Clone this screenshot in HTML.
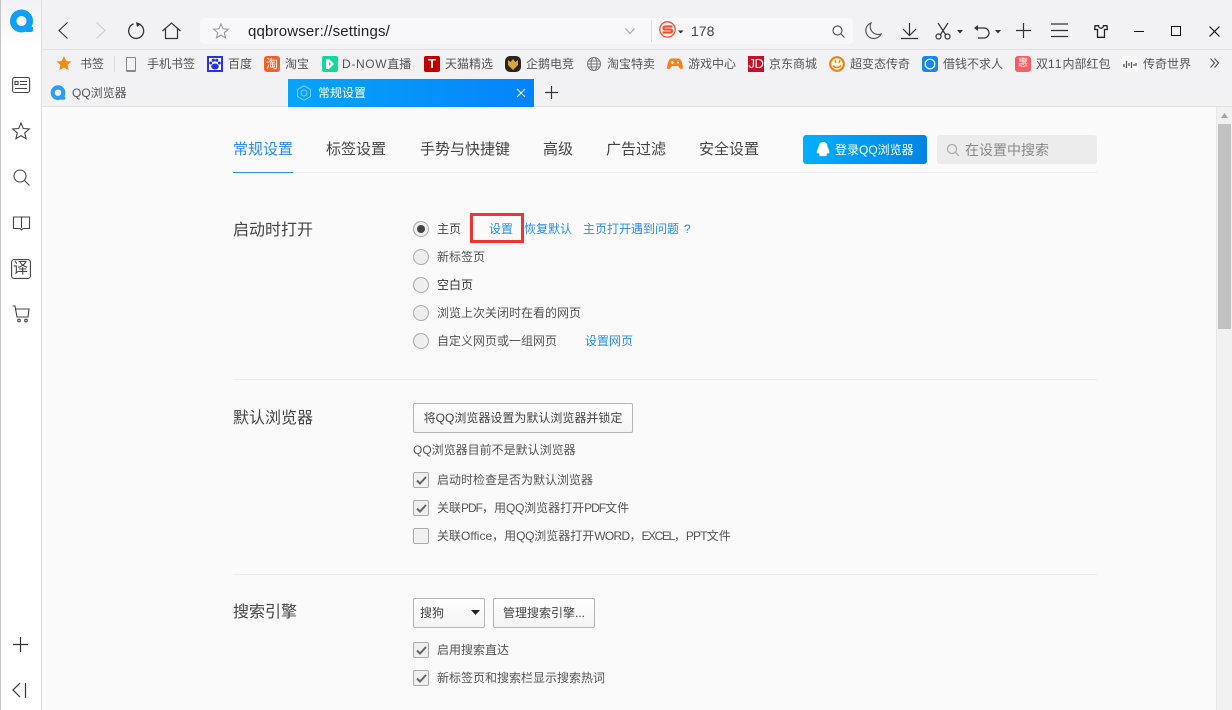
<!DOCTYPE html>
<html lang="zh"><head><meta charset="utf-8"><style>
*{box-sizing:border-box}
html,body{margin:0;padding:0;width:1232px;height:710px;overflow:hidden;background:#fafafa;font-family:"Liberation Sans","Noto Sans CJK SC",sans-serif;color:#444}
.a{position:absolute;white-space:nowrap}
svg.a{overflow:visible;fill:none;stroke:#333;stroke-width:1.2}
svg.s{stroke:#444;stroke-width:1.1}
.b{font-size:12px;line-height:16px;top:56px;color:#555}
.n{font-size:15px;line-height:20px;top:140px;color:#444}
.h{font-size:16px;line-height:22px;left:233px;color:#444}
.t{font-size:12px;line-height:16px;left:437px;color:#555}
.l{font-size:12px;line-height:16px;color:#2a8cf0}
.r{position:absolute;left:413px;width:16px;height:16px;border-radius:50%;border:1px solid #aaa;background:#eee}
.c{position:absolute;left:413px;width:16px;height:16px;border-radius:2px;border:1px solid #aaa;background:#f0f0f0}
.c svg{position:absolute;left:2px;top:3px;width:11px;height:9px;fill:none;stroke:#666;stroke-width:2}
.btn{position:absolute;border:1px solid #b5b5b5;border-radius:2px;background:linear-gradient(#fff,#f4f4f4);font-size:12px;color:#444;line-height:27px;text-align:center;white-space:nowrap}
.i{position:absolute;top:56px;width:16px;height:16px;border-radius:2px}
</style></head><body>
<div class="a" style="left:0;top:0;width:1232px;height:50px;background:#f2f2f5"></div>
<div class="a" style="left:42px;top:49px;width:1190px;height:31px;background:#f2f2f5;border-top:1px solid #e2e2e4;border-bottom:1px solid #e2e2e4"></div>
<div class="a" style="left:42px;top:79px;width:1190px;height:28px;background:#f2f2f5;border-bottom:1px solid #e2e2e4"></div>
<div class="a" style="left:0;top:0;width:42px;height:710px;background:#fff;border-left:1px solid #c4c4c4;border-right:1px solid #dedede"></div>
<div class="a" style="left:1px;top:0;width:40px;height:50px;background:linear-gradient(#f2f2f5,#fff)"></div>

<svg class="a" style="left:9px;top:9px;stroke:none" width="25" height="25" viewBox="0 0 25 25"><circle cx="12.500" cy="12" r="8.300" fill="none" stroke="#0fa0f5" stroke-width="6.500"/><path d="M15 18h9v3q0 2-2 2h-5z" fill="#0fa0f5"/></svg>
<svg class="a s" style="left:12px;top:77px" width="20" height="16" viewBox="0 0 20 16"><rect x=".6" y=".5" width="17" height="15" rx="2"/><rect x="3" y="4.500" width="3" height="3"/><path d="M8 4.500h7M8 7.500h7M3 11.500h12"/></svg>
<svg class="a s" style="left:12px;top:122px" width="18" height="18" viewBox="0 0 18 18"><path d="M9 1l2.300 5.500 6 .5-4.600 3.900 1.400 5.800L9 13.700l-5.100 3 1.400-5.800L.7 7l6-.5z"/></svg>
<svg class="a s" style="left:13px;top:169px" width="17" height="17" viewBox="0 0 17 17"><circle cx="7" cy="7" r="6"/><path d="M11.500 11.500l5 5"/></svg>
<svg class="a s" style="left:13px;top:216px" width="17" height="15" viewBox="0 0 17 15"><path d="M8.500 1H.5v11.500h6.500l1.500 1.500 1.500-1.500h6.500V1zM8.500 1v11"/></svg>
<svg class="a s" style="left:11px;top:259px" width="20" height="20" viewBox="0 0 20 20"><rect x=".6" y=".6" width="18.800" height="18.800" rx="2.500"/></svg>
<div class="a" style="left:13px;top:261px;font-size:15px;line-height:16px;color:#444">译</div>
<svg class="a s" style="left:12px;top:305px" width="18" height="18" viewBox="0 0 18 18"><path d="M.5 1H3l2 11h11l1-8H3.500"/><circle cx="7" cy="15.500" r="1.300"/><circle cx="14" cy="15.500" r="1.300"/></svg>
<svg class="a" style="left:13px;top:637px" width="16" height="16"><path d="M0 7.500h15M7.500 0v15"/></svg>
<svg class="a" style="left:12px;top:683px" width="15" height="15"><path d="M8 0L1 7l7 7M13.500 0v15"/></svg>

<svg class="a" style="left:58px;top:22px;stroke-width:1.100" width="11" height="18"><path d="M9.500.5L1 8.500l8.500 8"/></svg>
<svg class="a" style="left:96px;top:22px;stroke:#ccc;stroke-width:1.100" width="11" height="18"><path d="M.5.500L9 8.500l-8.500 8"/></svg>
<svg class="a" style="left:127px;top:21px;stroke-width:1.300" width="18" height="19" viewBox="0 0 18 19"><path d="M12.500 3.200a7.500 7.500 0 1 1-6-.3"/><path d="M9 1l5 2-4 3z" fill="#333" stroke="none"/></svg>
<svg class="a" style="left:162px;top:22px;stroke-width:1.200" width="19" height="17" viewBox="0 0 19 17"><path d="M.5 9L9.500 1l9 8M3.500 7v9.500h12V7"/></svg>
<div class="a" style="left:200px;top:18px;width:653px;height:26px;background:#f8f8fa;border-radius:4px"></div>
<svg class="a" style="left:213px;top:23px;stroke:#999" width="16" height="16" viewBox="0 0 18 18"><path d="M9 1l2.300 5.500 6 .5-4.600 3.900 1.400 5.800L9 13.700l-5.100 3 1.400-5.800L.7 7l6-.5z"/></svg>
<div class="a" style="left:248px;top:22px;font-size:15px;line-height:20px;color:#222;letter-spacing:.17px">qqbrowser://settings/</div>
<svg class="a" style="left:625px;top:28px;stroke:#aaa" width="11" height="7"><path d="M.5.500l4.500 5 4.500-5"/></svg>
<div class="a" style="left:651px;top:20px;width:1px;height:22px;background:#ddd"></div>
<svg class="a" style="left:659px;top:21px;stroke:none" width="25" height="17" viewBox="0 0 25 17"><circle cx="8.500" cy="8.500" r="7.700" fill="none" stroke="#f1502f" stroke-width="1.300"/><path d="M13.500 5.500H6a1.500 1.500 0 0 0 0 3h5.500a1.500 1.500 0 0 1 0 3H3.500" fill="none" stroke="#f1502f" stroke-width="2.300"/><path d="M19 9.500h5.500L21.700 12.500z" fill="#333"/></svg>
<div class="a" style="left:691px;top:22px;font-size:14px;line-height:18px;color:#444">178</div>
<svg class="a" style="left:832px;top:25px;stroke:#555" width="13" height="13"><circle cx="5.500" cy="5.500" r="4.500"/><path d="M9 9l3.500 3.500"/></svg>
<svg class="a" style="left:865px;top:22px;stroke:#555" width="17" height="18" viewBox="0 0 17 18"><path d="M6 1a8 8 0 1 0 10 11A8 8 0 0 1 6 1z"/></svg>
<svg class="a" style="left:901px;top:22px" width="17" height="18"><path d="M8.500 1v12M2 7l6.500 6.500L15 7M0 16.500h17"/></svg>
<svg class="a" style="left:935px;top:22px" width="16" height="18" viewBox="0 0 16 18"><path d="M3 1l7.500 11.500M13 1L5.500 12.500"/><circle cx="3.500" cy="14.500" r="2.500"/><circle cx="12.500" cy="14.500" r="2.500"/></svg>
<svg class="a" style="left:957px;top:30px;stroke:none" width="6" height="4"><path d="M0 0h6L3 3.500z" fill="#333"/></svg>
<svg class="a" style="left:973px;top:23px" width="17" height="17" viewBox="0 0 17 17"><path d="M5 5h6a5 5 0 0 1 0 10H5"/><path d="M5 2L1 5l4 3z" fill="#333" stroke="none"/></svg>
<svg class="a" style="left:995px;top:30px;stroke:none" width="6" height="4"><path d="M0 0h6L3 3.500z" fill="#333"/></svg>
<svg class="a" style="left:1016px;top:23px" width="15" height="15"><path d="M0 7.500h15M7.500 0v15"/></svg>
<svg class="a" style="left:1051px;top:23px" width="17" height="14"><path d="M0 1h17M0 7.500h17M0 13.500h17"/></svg>
<svg class="a" style="left:1094px;top:25px;stroke:#222;stroke-width:1.300" width="14" height="13" viewBox="0 0 14 13"><path d="M4.500.7H1L.7 4.500h2.800v7.800h7V4.500h2.800L13 .7H9.500a2.500 2.500 0 0 1-5 0z"/></svg>
<div class="a" style="left:1134px;top:31px;width:10px;height:1px;background:#111"></div>
<div class="a" style="left:1171px;top:26px;width:10px;height:10px;border:1px solid #111"></div>
<svg class="a" style="left:1209px;top:26px;stroke:#111" width="11" height="11"><path d="M.5.500l10 10M10.500.500l-10 10"/></svg>

<svg class="a" style="left:56px;top:56px;stroke:none" width="16" height="15" viewBox="0 0 18 18"><path d="M9 0l2.700 6 6.300.6-4.700 4.200 1.400 6.300L9 13.800l-5.700 3.300 1.400-6.300L0 6.600 6.300 6z" fill="#f58b14"/></svg>
<div class="a b" style="left:80px">书签</div>
<div class="a" style="left:114px;top:56px;width:1px;height:16px;background:#ddd"></div>
<div class="a" style="left:126px;top:57px;width:10px;height:15px;border:1.500px solid #888;border-bottom-width:2.500px;border-radius:1px"></div>
<div class="a b" style="left:147px">手机书签</div>
<div class="i" style="left:207px;background:#fff;border:2px solid #2932e1;border-radius:0"></div>
<svg class="a" style="left:209px;top:58px;stroke:none" width="12" height="12"><ellipse cx="6" cy="8.500" rx="3.800" ry="3" fill="#2932e1"/><circle cx="1.700" cy="5" r="1.500" fill="#2932e1"/><circle cx="10.300" cy="5" r="1.500" fill="#2932e1"/><circle cx="4.300" cy="2.200" r="1.600" fill="#2932e1"/><circle cx="7.700" cy="2.200" r="1.600" fill="#2932e1"/></svg>
<div class="a b" style="left:228px">百度</div>
<div class="i" style="left:264px;background:#f0602a;border-radius:3px;color:#fff;font-size:12px;line-height:16px;text-align:center">淘</div>
<div class="a b" style="left:285px">淘宝</div>
<div class="i" style="left:322px;background:#12d99b"></div>
<svg class="a" style="left:325px;top:59px;stroke:none" width="10" height="10"><path d="M1 0h3l5 5-5 5H1z" fill="#fff"/><path d="M4 3l2 2-2 2z" fill="#12d99b"/></svg>
<div class="a b" style="left:342px"><span style="letter-spacing:.65px">D-NOW</span>直播</div>
<div class="i" style="left:424px;background:#c00000;color:#fff;font-size:13px;font-weight:bold;line-height:16px;text-align:center">T</div>
<div class="a b" style="left:445px">天猫精选</div>
<div class="i" style="left:505px;background:#2b2419;border-radius:5px"></div>
<svg class="a" style="left:507px;top:58px;stroke:none" width="12" height="12"><path d="M1 2l2.500 2L6 1l2.500 3L11 2v5l-5 5-5-5z" fill="#d9a441"/></svg>
<div class="a b" style="left:526px">企鹅电竞</div>
<svg class="a" style="left:587px;top:57px;stroke:#777;stroke-width:1" width="14" height="14"><circle cx="7" cy="7" r="6.500"/><ellipse cx="7" cy="7" rx="3" ry="6.500"/><path d="M.5 7h13M1.500 4h11M1.500 10h11"/></svg>
<div class="a b" style="left:607px">淘宝特卖</div>
<svg class="a" style="left:667px;top:57px;stroke:none" width="16" height="14"><path d="M4 1.500h8c2 0 3.500 5 4 9 0 2-2 2-3 1l-2-2.500H5L3 11.500c-1 1-3 1-3-1 .5-4 2-9 4-9z" fill="#f5821f"/><path d="M4 5.500h3M5.500 4v3" stroke="#fff" fill="none"/><circle cx="11" cy="5.500" r="1" fill="#fff"/></svg>
<div class="a b" style="left:688px">游戏中心</div>
<div class="i" style="left:748px;background:#c5102a;border-radius:0;color:#fff;font-size:13px;line-height:16px;text-align:center;letter-spacing:-.5px">JD</div>
<div class="a b" style="left:769px">京东商城</div>
<svg class="a" style="left:829px;top:56px;stroke:none" width="16" height="16"><circle cx="8" cy="8" r="6.800" fill="#fff3dc" stroke="#e8861c" stroke-width="2.200"/><path d="M4 9.500c2 2.500 6 2.500 8 0" fill="none" stroke="#e8861c" stroke-width="1.500"/><path d="M6 4l1 3M11 4l-1 3" fill="none" stroke="#e8861c" stroke-width="1.200"/></svg>
<div class="a b" style="left:850px">超变态传奇</div>
<div class="i" style="left:922px;background:#1787f0;border-radius:3px"></div>
<svg class="a" style="left:924px;top:58px;stroke:#fff" width="12" height="12"><circle cx="6" cy="6" r="4.800"/></svg>
<div class="a b" style="left:943px">借钱不求人</div>
<div class="i" style="left:1015px;background:#fa5c63;border-radius:3px;color:#fff;font-size:10px;line-height:16px;text-align:center">惠</div>
<div class="a b" style="left:1036px">双<span style="letter-spacing:1px">11</span>内部红包</div>
<div class="i" style="left:1122px;background:#fff"></div>
<svg class="a" style="left:1123px;top:60px;stroke:#555;stroke-width:1.300" width="14" height="9"><path d="M1 4v3M3.500 1v7M6 3v3M8.500 2v6M11 4v2M13 3v3"/></svg>
<div class="a b" style="left:1143px">传奇世界</div>
<svg class="a" style="left:1210px;top:58px;stroke:#555" width="10" height="10"><path d="M.5.500l4 4.500-4 4.500M4.500.500l4 4.500-4 4.500"/></svg>

<svg class="a" style="left:50px;top:85px;stroke:none" width="16" height="16" viewBox="0 0 25 25"><circle cx="12.500" cy="12" r="8.300" fill="none" stroke="#2a9df4" stroke-width="6.500"/><path d="M15 18h9v3q0 2-2 2h-5z" fill="#2a9df4"/></svg>
<div class="a" style="left:72px;top:85px;font-size:12px;line-height:16px;color:#555">QQ浏览器</div>
<div class="a" style="left:288px;top:79px;width:246px;height:28px;background:linear-gradient(90deg,#06a4f8,#0583fa)"></div>
<svg class="a" style="left:296px;top:85px;stroke:#7fcdfb;stroke-width:1" width="16" height="16"><path d="M8 .8l6.500 3.600v7.200L8 15.200l-6.500-3.600V4.400z"/><circle cx="8" cy="8" r="3"/></svg>
<div class="a" style="left:318px;top:85px;font-size:12px;line-height:16px;color:#fff">常规设置</div>
<svg class="a" style="left:517px;top:89px;stroke:#fff;stroke-width:1" width="8" height="8"><path d="M0 0l8 8M8 0L0 8"/></svg>
<svg class="a" style="left:545px;top:86px;stroke-width:1.200" width="13" height="13"><path d="M0 6.500h13M6.500 0v13"/></svg>

<div class="a" style="left:1216px;top:107px;width:16px;height:603px;background:#f1f1f1;border-left:1px solid #e8e8e8"></div>
<svg class="a" style="left:1221px;top:113px;stroke:none" width="7" height="5"><path d="M3.500 0L7 5H0z" fill="#a3a3a3"/></svg>
<div class="a" style="left:1218px;top:124px;width:13px;height:205px;background:#c1c1c1"></div>

<div class="a n" style="left:233px;color:#2a8cf0">常规设置</div>
<div class="a n" style="left:326px">标签设置</div>
<div class="a n" style="left:420px">手势与快捷键</div>
<div class="a n" style="left:543px">高级</div>
<div class="a n" style="left:606px">广告过滤</div>
<div class="a n" style="left:699px">安全设置</div>
<div class="a" style="left:233px;top:172px;width:864px;height:1px;background:#ededed"></div>
<div class="a" style="left:233px;top:172px;width:60px;height:1px;background:#2a8cf0"></div>
<div class="a" style="left:803px;top:135px;width:124px;height:29px;border-radius:3px;background:linear-gradient(90deg,#04aefc,#0484e4)"></div>
<svg class="a" style="left:817px;top:142px;stroke:none" width="13" height="15" viewBox="0 0 14 17"><path d="M7 0c3 0 4.500 2.500 4.500 5.500 1 2 2.500 4.500 2 7-.5 1-1.500 0-2-.5-.2 1.500-.5 2-1.500 2.800 1 .5 1 1.200 0 1.200H3c-1 0-1-.7 0-1.200C2 14 1.700 13.500 1.500 12c-.5.500-1.500 1.500-2 .5-.5-2.500 1-5 2-7C1.500 2.500 4 0 7 0z" fill="#fff"/></svg>
<div class="a" style="left:835px;top:142px;font-size:12px;line-height:16px;color:#fff">登录QQ浏览器</div>
<div class="a" style="left:937px;top:135px;width:160px;height:29px;border-radius:3px;background:#ececec"></div>
<svg class="a" style="left:947px;top:144px;stroke:#aaa" width="12" height="12"><circle cx="5" cy="5" r="4.500"/><path d="M8.300 8.300l3.500 3.500"/></svg>
<div class="a" style="left:965px;top:142px;font-size:14px;line-height:16px;color:#888">在设置中搜索</div>

<div class="a h" style="top:220px">启动时打开</div>
<div class="r" style="top:221px"></div><div class="a" style="left:417px;top:225px;width:8px;height:8px;border-radius:50%;background:#444"></div>
<div class="a t" style="top:221px;color:#444">主页</div>
<div class="a" style="left:470px;top:213px;width:54px;height:30px;border:3px solid #f43232"></div>
<div class="a l" style="left:489px;top:221px">设置</div>
<div class="a l" style="left:524px;top:221px">恢复默认</div>
<div class="a l" style="left:583px;top:221px">主页打开遇到问题</div>
<div class="a l" style="left:684px;top:221px">?</div>
<div class="r" style="top:249px"></div><div class="a t" style="top:249px">新标签页</div>
<div class="r" style="top:277px"></div><div class="a t" style="top:277px;color:#333">空白页</div>
<div class="r" style="top:305px"></div><div class="a t" style="top:305px">浏览上次关闭时在看的网页</div>
<div class="r" style="top:333px"></div><div class="a t" style="top:333px">自定义网页或一组网页</div>
<div class="a l" style="left:585px;top:333px">设置网页</div>
<div class="a" style="left:233px;top:379px;width:864px;height:1px;background:#ececec"></div>

<div class="a h" style="top:408px">默认浏览器</div>
<div class="btn" style="left:413px;top:403px;width:220px;height:30px;line-height:28px">将QQ浏览器设置为默认浏览器并锁定</div>
<div class="a t" style="left:413px;top:442px">QQ浏览器目前不是默认浏览器</div>
<div class="c" style="top:472px"><svg viewBox="0 0 11 9"><path d="M1 4.500l3 3L10 1"/></svg></div><div class="a t" style="top:472px">启动时检查是否为默认浏览器</div>
<div class="c" style="top:500px"><svg viewBox="0 0 11 9"><path d="M1 4.500l3 3L10 1"/></svg></div><div class="a t" style="top:500px">关联<span style="letter-spacing:-1px">PDF</span>，用<span style="letter-spacing:-.3px">QQ</span>浏览器打开<span style="letter-spacing:-1px">PDF</span>文件</div>
<div class="c" style="top:528px"></div><div class="a t" style="top:528px">关联Office，用<span style="letter-spacing:-.3px">QQ</span>浏览器打开<span style="letter-spacing:-.7px">WORD</span>，<span style="letter-spacing:-1.400px">EXCEL</span>，<span style="letter-spacing:-.8px">PPT</span>文件</div>
<div class="a" style="left:233px;top:574px;width:864px;height:1px;background:#ececec"></div>

<div class="a h" style="top:602px">搜索引擎</div>
<div class="btn" style="left:413px;top:598px;width:72px;height:30px;text-align:left;padding-left:6px;line-height:28px">搜狗</div>
<svg class="a" style="left:471px;top:610px;stroke:none" width="9" height="5"><path d="M0 0h9L4.500 5z" fill="#222"/></svg>
<div class="btn" style="left:493px;top:598px;width:102px;height:30px;line-height:28px">管理搜索引擎...</div>
<div class="c" style="top:642px"><svg viewBox="0 0 11 9"><path d="M1 4.500l3 3L10 1"/></svg></div><div class="a t" style="top:642px">启用搜索直达</div>
<div class="c" style="top:670px"><svg viewBox="0 0 11 9"><path d="M1 4.500l3 3L10 1"/></svg></div><div class="a t" style="top:670px">新标签页和搜索栏显示搜索热词</div>
</body></html>
